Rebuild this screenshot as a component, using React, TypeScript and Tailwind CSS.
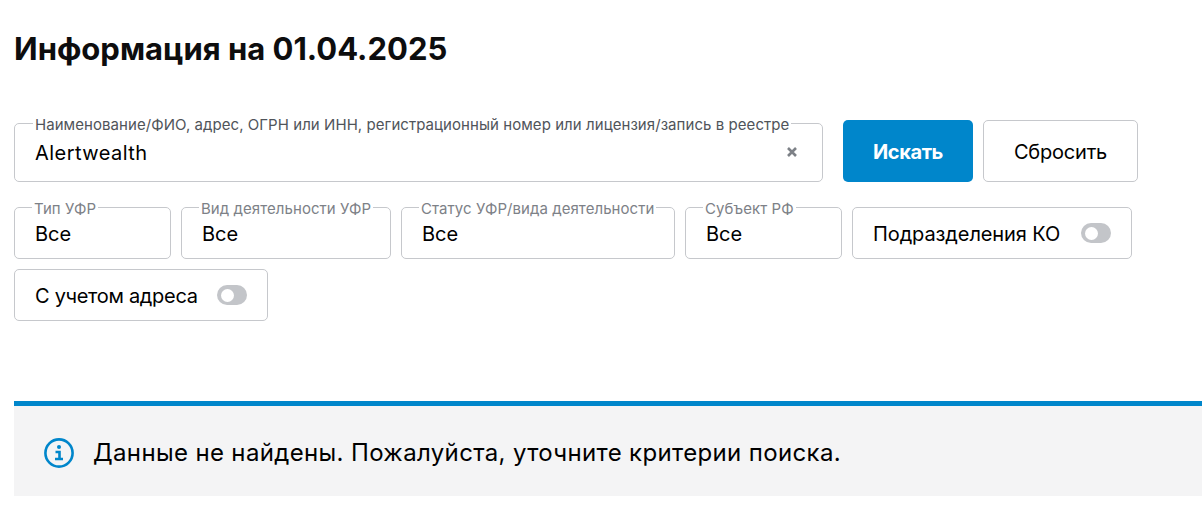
import React from 'react';

interface SelectFieldProps {
  label: string;
  className: string;
}

const SelectField: React.FC<SelectFieldProps> = ({ label, className }) => (
  <fieldset className={`h-[60px] rounded-[5px] border border-[#c6c8cc] pl-[14px] ${className}`}>
    <legend className="ml-[3px] h-[16px] px-[2px] text-[15px] leading-[20px] tracking-[0.06px] whitespace-nowrap text-[#7d8187]">{label}</legend>
    <div className="mt-[7px] pl-[6px] text-[20px] leading-[24px] text-black">Все</div>
  </fieldset>
);

const ToggleField: React.FC<{ label: string; className: string; textClass: string }> = ({ label, className, textClass }) => (
  <div className={`flex h-[52px] items-center justify-between rounded-[5px] border border-[#c6c8cc] pl-[20px] pr-[20px] ${className}`}>
    <span className={`mt-[1px] text-[20px] leading-[24px] whitespace-nowrap text-black ${textClass}`}>{label}</span>
    <span className="flex h-[20px] w-[30px] items-center rounded-full bg-[#c3c5c9] pl-[4px]">
      <span className="h-[13px] w-[13px] rounded-full bg-white"></span>
    </span>
  </div>
);

export default function App() {
  return (
    <div className="h-[521px] w-[1202px] overflow-hidden bg-white pl-[14px] font-['Inter','Noto_Sans',sans-serif]">
      <h1 className="pt-[29px] text-[31px] leading-[40px] font-bold text-[#0d0d0e]">Информация на 01.04.2025</h1>

      <div className="mt-[46px] flex items-end">
        <fieldset className="h-[67px] w-[809px] rounded-[5px] border border-[#c6c8cc] pl-[14px]">
          <legend className="ml-[4px] h-[16px] px-[2px] text-[15px] leading-[20px] tracking-[0.06px] whitespace-nowrap text-[#50545a]">
            Наименование/ФИО, адрес, ОГРН или ИНН, регистрационный номер или лицензия/запись в реестре
          </legend>
          <div className="flex items-center justify-between pr-[25px]">
            <span className="mt-[10px] pl-[6px] text-[20px] leading-[24px] tracking-[0.45px] text-black">Alertwealth</span>
            <svg className="mt-[8px]" width="10" height="10" viewBox="0 0 10 10">
              <path d="M1 1l8 8M9 1l-8 8" stroke="#7d8187" strokeWidth="2.6" fill="none" />
            </svg>
          </div>
        </fieldset>
        <button className="ml-[20px] h-[62px] w-[130px] rounded-[5px] bg-[#0086cb] pt-[2px] text-[20px] font-bold tracking-[-0.4px] text-white">Искать</button>
        <button className="ml-[10px] h-[62px] w-[155px] rounded-[5px] border border-[#c6c8cc] bg-white pt-[2px] text-[20px] tracking-[-0.2px] text-black">Сбросить</button>
      </div>

      <div className="mt-[17px] flex w-[1180px] flex-wrap gap-x-[10px] gap-y-[10px]">
        <SelectField label="Тип УФР" className="w-[157px]" />
        <SelectField label="Вид деятельности УФР" className="w-[210px]" />
        <SelectField label="Статус УФР/вида деятельности" className="w-[274px]" />
        <SelectField label="Субъект РФ" className="w-[157px]" />
        <ToggleField label="Подразделения КО" className="mt-[8px] w-[280px]" textClass="tracking-[-0.1px]" />
        <ToggleField label="С учетом адреса" className="w-[254px]" textClass="tracking-[-0.3px]" />
      </div>

      <div className="mt-[80px] flex h-[95px] items-center border-t-[5px] border-[#0086cb] bg-[#f4f4f5] pl-[30px] pt-[4px]">
        <svg width="30" height="30" viewBox="0 0 30 30" fill="none">
          <circle cx="15" cy="15" r="13.6" stroke="#0086cb" strokeWidth="2.6" />
          <circle cx="15" cy="9" r="2" fill="#0086cb" />
          <path d="M11.5 14h4v7M11 21h8" stroke="#0086cb" strokeWidth="2.6" />
        </svg>
        <span className="ml-[19px] text-[24px] leading-[30px] tracking-[0.35px] text-black">Данные не найдены. Пожалуйста, уточните критерии поиска.</span>
      </div>
    </div>
  );
}
